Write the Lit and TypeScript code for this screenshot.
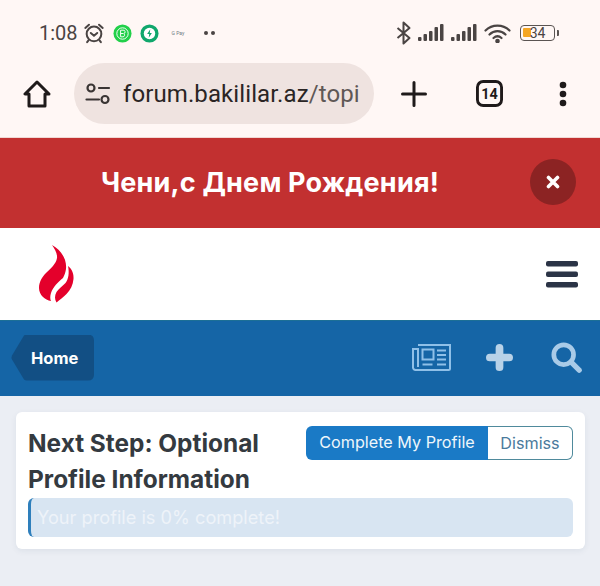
import { LitElement, html, css } from "lit";
import { customElement } from "lit/decorators.js";

@customElement("app-root")
export class AppRoot extends LitElement {
  static styles = css`
    :host { display: block; width: 600px; height: 586px; overflow: hidden; background: #ebeef4; font-family: Inter, sans-serif; }
    svg { display: block; flex: none; }
    .chrome { height: 137px; background: #fff7f5; border-bottom: 1px solid #f0d8d4; box-sizing: content-box; }
    .status { box-sizing: border-box; padding: 3px 0 0 39px; display: flex; align-items: center; height: 63px; }
    .time { font: 400 20px/26px Roboto, sans-serif; color: #4a4443; width: 44px; }
    .status-left { display: flex; align-items: center; }
    .status-right { display: flex; align-items: center; margin-left: auto; margin-right: 41px; }
    .gpay { font: 400 5px/20px Roboto, sans-serif; color: #6c7a80; width: 20px; text-align: center; margin-left: 9px; }
    .dots { display: flex; gap: 3px; margin-left: 16px; }
    .dots i { width: 4px; height: 4px; border-radius: 50%; background: #4a4443; }
    .batt { position: relative; width: 35px; height: 16px; border: 1.5px solid #5a5452; border-radius: 4px; box-sizing: border-box; margin-left: 9px; font: 400 14px/14px Roboto, sans-serif; color: #4a4443; text-align: center; background: #fff7f5; }
    .batt::before { content: ""; position: absolute; left: 2px; top: 2px; width: 8px; height: 9px; background: #f5a623; border-radius: 1px; }
    .batt span { position: relative; }
    .batt-tip { width: 2px; height: 6px; background: #5a5452; border-radius: 0 1px 1px 0; margin-left: 2px; }
    .toolbar { display: flex; align-items: center; padding-left: 23px; height: 61px; }
    .pill { width: 300px; height: 61px; margin-left: 23px; background: #efe3e0; border-radius: 31px; display: flex; align-items: center; padding-left: 11px; box-sizing: border-box; overflow: hidden; white-space: nowrap; }
    .url { margin-left: 12px; font: 400 24px/30px Roboto, sans-serif; color: #2a2524; letter-spacing: 0.1px; }
    .url span { color: #5f5856; }
    .tb-plus { margin-left: 27px; }
    .tb-tabs { margin-left: 49px; }
    .tb-more { margin-left: 56px; }
    .banner { height: 90px; background: #c23030; display: flex; align-items: center; }
    .banner-text { width: 540px; text-align: center; color: #fff; font: 700 27px/32px Inter, sans-serif; letter-spacing: 0.2px; }
    .close { width: 46px; height: 46px; border-radius: 50%; background: #8c2323; display: flex; align-items: center; justify-content: center; margin: -2px 0 0 -10px; }
    .head { height: 92px; background: #fff; display: flex; align-items: center; justify-content: space-between; padding: 0 22px 0 38px; }
    .nav { height: 76px; background: #1565a6; border-top: 1px solid #1c6f96; box-sizing: border-box; display: flex; align-items: center; padding: 0 18px 2px 11px; }
    .home { height: 46px; width: 83px; background: #124f84; color: #fff; font: 700 16.5px/46px Inter, sans-serif; clip-path: path("M13 1Q14 0 16 0H77Q83 0 83 6V40Q83 46 77 46H16Q14 46 13 45L1 25Q0 23 1 21Z"); padding-left: 20px; box-sizing: border-box; }
    .nav-icons { margin-left: auto; display: flex; align-items: center; }
    .card { margin: 16px 15px 0 16px; height: 137px; background: #fff; border-radius: 6px; box-shadow: 0 2px 6px rgba(30, 50, 80, 0.07); padding: 13px 12px 12px; box-sizing: border-box; }
    .top { display: flex; justify-content: space-between; align-items: flex-start; margin-bottom: 1px; }
    h2 { margin: 0; width: 270px; font: 700 24.4px/36px Inter, sans-serif; color: #343a40; }
    .btns { display: flex; height: 34px; margin-top: 1px; }
    .btn { font: 400 16.2px/32px Inter, sans-serif; box-sizing: border-box; height: 34px; }
    .primary { width: 182px; background: #1a7ac6; color: #eef6fb; text-align: center; border-radius: 6px 0 0 6px; }
    .ghost { width: 85px; border: 1px solid #4f8a9c; border-left: none; color: #4a7a9c; text-align: center; border-radius: 0 6px 6px 0; background: #fff; }
    .alert { height: 39px; background: #d8e5f2; border-left: 3px solid #2e7fbc; border-radius: 6px; padding-left: 6px; color: #eef3f9; font: 400 18.2px/39px Inter, sans-serif; box-sizing: border-box; }
  `;

  render() {
    return html`
      <div class="chrome">
        <div class="status">
          <div class="status-left">
            <span class="time">1:08</span>
            <svg width="22" height="24" viewBox="0 0 24 24" fill="none" stroke="#4a4443" stroke-width="2.200" stroke-linecap="round">
              <circle cx="12" cy="13" r="8"/>
              <path d="M8.500 12l3.500 3 3.500-3M2.500 6.500l4-3.500M21.500 6.500l-4-3.500M6 20l-1.500 2M18 20l1.500 2"/>
            </svg>
            <svg style="margin-left:8px" width="19" height="19" viewBox="0 0 20 20">
              <circle cx="10" cy="10" r="9.500" fill="#22d04a"/>
              <circle cx="10" cy="10" r="6" fill="none" stroke="#fff" stroke-width="1"/>
              <path d="M8 6.500v7h2.600a1.800 1.800 0 0 0 .6-3.400 1.700 1.700 0 0 0-.6-3.600zM8 10h2.600" fill="none" stroke="#fff" stroke-width="1"/>
            </svg>
            <svg style="margin-left:8px" width="19" height="19" viewBox="0 0 20 20">
              <circle cx="10" cy="10" r="9.500" fill="#10a76c"/>
              <circle cx="10" cy="10" r="6" fill="#fff"/>
              <path d="M10.800 5.500L7.500 10.600h2.200l-.5 3.900 3.300-5.100h-2.200z" fill="#10a76c"/>
            </svg>
            <span class="gpay">G Pay</span>
            <span class="dots"><i></i><i></i></span>
          </div>
          <div class="status-right">
            <svg width="18" height="24" viewBox="0 0 18 24" fill="none" stroke="#4a4443" stroke-width="2" stroke-linejoin="round">
              <path d="M2.500 7l12 10-6 5.500V1.500l6 5.500-12 10"/>
            </svg>
            <svg style="margin-left:5px" width="27" height="20" viewBox="0 0 27 20" fill="#4a4443">
              <rect x="0" y="14" width="3.500" height="4" rx="1"/><rect x="5.500" y="11" width="3.500" height="7" rx="1"/><rect x="11" y="8" width="3.500" height="10" rx="1"/><rect x="16.500" y="4" width="3.500" height="14" rx="1"/><rect x="22" y="1" width="3.500" height="17" rx="1"/>
            </svg>
            <svg style="margin-left:6px" width="27" height="20" viewBox="0 0 27 20" fill="#4a4443">
              <rect x="0" y="14" width="3.500" height="4" rx="1"/><rect x="5.500" y="11" width="3.500" height="7" rx="1"/><rect x="11" y="8" width="3.500" height="10" rx="1"/><rect x="16.500" y="4" width="3.500" height="14" rx="1"/><rect x="22" y="1" width="3.500" height="17" rx="1"/>
            </svg>
            <svg style="margin-left:6px" width="27" height="20" viewBox="0 0 27 20" fill="none" stroke="#4a4443" stroke-width="2.200" stroke-linecap="round">
              <path d="M1.500 7.500C8 1 19 1 25.500 7.500M5.500 11.500c4.500-4.500 11.500-4.500 16 0M9.500 15c2.500-2.200 5.500-2.200 8 0"/>
              <circle cx="13.500" cy="18" r="1.200" fill="#4a4443"/>
            </svg>
            <div class="batt"><span>34</span></div>
            <div class="batt-tip"></div>
          </div>
        </div>
        <div class="toolbar">
          <svg width="28" height="28" viewBox="0 0 28 28" fill="none" stroke="#1f1a1a" stroke-width="3" stroke-linejoin="round">
            <path d="M14 2L2 14h4v12h16V14h4z"/>
          </svg>
          <div class="pill">
            <svg width="26" height="22" viewBox="0 0 26 22" fill="none" stroke="#3a3534" stroke-width="2.200" stroke-linecap="round">
              <circle cx="6" cy="5" r="3.500"/><path d="M14 5h10M1.500 16.500H14"/><circle cx="20" cy="16.500" r="3.500"/>
            </svg>
            <span class="url">forum.bakililar.az<span>/topi</span></span>
          </div>
          <svg class="tb-plus" width="26" height="26" viewBox="0 0 26 26" stroke="#1f1a1a" stroke-width="3" stroke-linecap="round">
            <path d="M13 1.500v23M1.500 13h23"/>
          </svg>
          <svg class="tb-tabs" width="27" height="27" viewBox="0 0 28 28">
            <rect x="1.500" y="1.500" width="25" height="25" rx="6" fill="none" stroke="#1f1a1a" stroke-width="3"/>
            <text x="14" y="19.500" text-anchor="middle" font-family="Roboto, sans-serif" font-size="15" font-weight="700" fill="#1f1a1a">14</text>
          </svg>
          <svg class="tb-more" width="8" height="26" viewBox="0 0 8 26" fill="#1f1a1a">
            <circle cx="4" cy="4" r="3.300"/><circle cx="4" cy="13" r="3.300"/><circle cx="4" cy="22" r="3.300"/>
          </svg>
        </div>
      </div>
      <div class="banner">
        <div class="banner-text">Чени,с Днем Рождения!</div>
        <div class="close">
          <svg width="14" height="14" viewBox="0 0 14 14" stroke="#fff" stroke-width="3.600" stroke-linecap="round"><path d="M2.500 2.500l9 9M11.500 2.500l-9 9"/></svg>
        </div>
      </div>
      <div class="head">
        <svg width="36" height="58" viewBox="0 0 36 58" fill="#e4002b">
          <path d="M14 0C23 5 29 14 28 24c-.5 4-2 7-3 9-5 4-10 9-12 15-1 3-1 6 0 8-6-1-12-6-12-13 0-6 3-11 7-15 5-5 10-9 11-15 .5-4-2-9-5-13z"/>
          <path d="M30 21c4 3 6 8 5.500 13-.5 6-3 11-7 15-3 3-7 6-10 8.500-2-3-2-7 0-10.500 2-3 6-6 9-9 3-4 4-10 2.500-17z"/>
        </svg>
        <svg width="32" height="27" viewBox="0 0 32 27" fill="#2b3446">
          <rect width="32" height="5.500" rx="2"/><rect y="10.500" width="32" height="5.500" rx="2"/><rect y="21" width="32" height="5.500" rx="2"/>
        </svg>
      </div>
      <div class="nav">
        <div class="home">Home</div>
        <div class="nav-icons">
          <svg width="39" height="27" viewBox="0 0 39 27" fill="none" stroke="#8fc0e8" stroke-width="2">
            <path d="M6 1h32v23.500a1.500 1.500 0 0 1-1.500 1.500H3.500A2.500 2.500 0 0 1 1 23.500V5h5v18"/>
            <rect x="10.500" y="5.500" width="11" height="10"/>
            <path d="M25 6.500h9M25 11h9M25 15.500h9M10.500 20.500h10M25 20.500h9"/>
          </svg>
          <svg style="margin-left:35px" width="27" height="27" viewBox="0 0 28 28" stroke="#b8d2e8" stroke-width="8" stroke-linecap="round">
            <path d="M14 4v20M4 14h20"/>
          </svg>
          <svg style="margin-left:38px" width="31" height="31" viewBox="0 0 33 33" fill="none" stroke="#a9cbe8" stroke-linecap="round">
            <circle cx="13.500" cy="13.500" r="10.500" stroke-width="5"/>
            <path d="M22 22l8 8" stroke-width="5.500"/>
          </svg>
        </div>
      </div>
      <div class="card">
        <div class="top">
          <h2>Next Step: Optional Profile Information</h2>
          <div class="btns">
            <div class="btn primary">Complete My Profile</div>
            <div class="btn ghost">Dismiss</div>
          </div>
        </div>
        <div class="alert">Your profile is 0% complete!</div>
      </div>
    `;
  }
}
